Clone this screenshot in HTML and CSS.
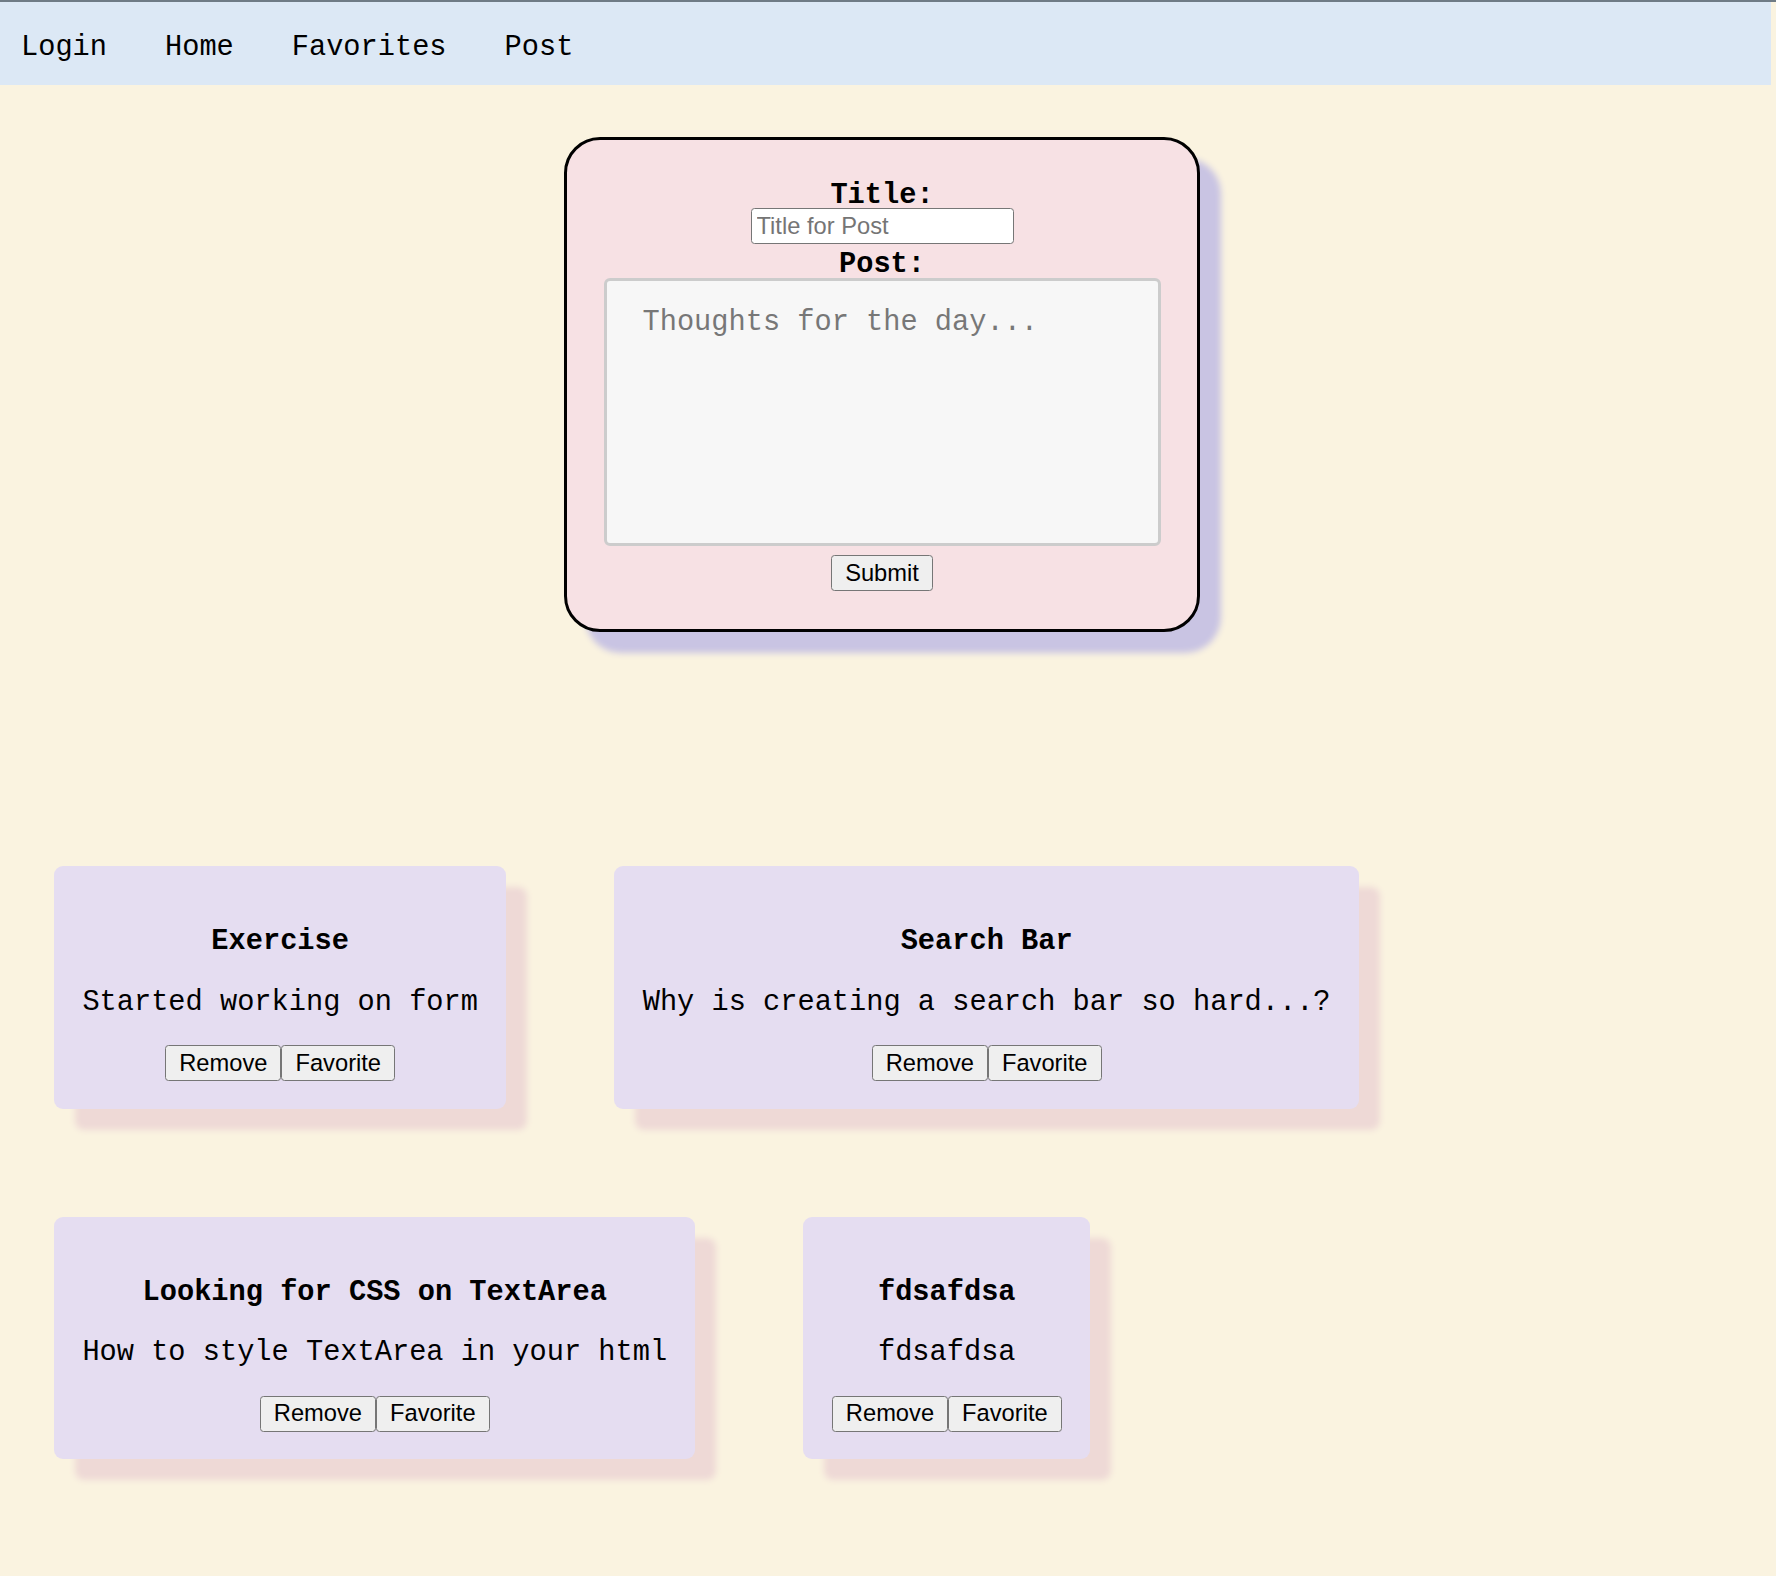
FILE: index.html
```html
<!DOCTYPE html>
<html lang="en">
<head>
<meta charset="utf-8">
<title>Posts</title>
<link rel="stylesheet" href="styles.css">
</head>
<body>
<div class="topline"></div>
<nav class="nav">
  <a class="nav-link" href="#">Login</a>
  <a class="nav-link" href="#">Home</a>
  <a class="nav-link" href="#">Favorites</a>
  <a class="nav-link" href="#">Post</a>
</nav>
<main>
  <section class="composer">
    <form class="post-form">
      <label class="form-label" for="title">Title:</label>
      <input class="title-input" id="title" type="text" placeholder="Title for Post">
      <label class="form-label post-label" for="post">Post:</label>
      <textarea class="post-input" id="post" placeholder="Thoughts for the day..."></textarea>
      <button class="btn submit-btn" type="button">Submit</button>
    </form>
  </section>
  <section class="posts">
    <article class="card">
      <p class="card-title">Exercise</p>
      <p class="card-body">Started working on form</p>
      <div class="card-actions"><button class="btn" type="button">Remove</button><button class="btn" type="button">Favorite</button></div>
    </article>
    <article class="card">
      <p class="card-title">Search Bar</p>
      <p class="card-body">Why is creating a search bar so hard...?</p>
      <div class="card-actions"><button class="btn" type="button">Remove</button><button class="btn" type="button">Favorite</button></div>
    </article>
    <article class="card">
      <p class="card-title">Looking for CSS on TextArea</p>
      <p class="card-body">How to style TextArea in your html</p>
      <div class="card-actions"><button class="btn" type="button">Remove</button><button class="btn" type="button">Favorite</button></div>
    </article>
    <article class="card">
      <p class="card-title">fdsafdsa</p>
      <p class="card-body">fdsafdsa</p>
      <div class="card-actions"><button class="btn" type="button">Remove</button><button class="btn" type="button">Favorite</button></div>
    </article>
  </section>
</main>
</body>
</html>
```
FILE: styles.css
```css
* {
  box-sizing: border-box;
}

html,
body {
  margin: 0;
  padding: 0;
}

body {
  background: #faf3e0;
  font-family: "Liberation Mono", "Courier New", monospace;
  color: #000;
}

.topline {
  height: 2px;
  background: #6f7b85;
}

.nav {
  width: 1771px;
  height: 83px;
  background: #dce8f5;
  display: flex;
  gap: 58px;
  padding: 30px 0 0 21px;
}

.nav-link {
  font-size: 28.67px;
  line-height: 32px;
  color: #000;
  text-decoration: none;
}

.composer {
  display: flex;
  justify-content: center;
  padding-right: 12px;
  margin-top: 52px;
}

.post-form {
  width: 636px;
  height: 495px;
  background: #f7e1e4;
  border: 3px solid #000;
  border-radius: 36px;
  box-shadow: 21px 21px 6px #c9c4e3;
  padding: 40px 36px 38px;
  display: flex;
  flex-direction: column;
  align-items: center;
}

.form-label {
  font-size: 28.67px;
  font-weight: bold;
  line-height: 32px;
}

.title-input {
  width: 263px;
  height: 36px;
  margin-top: -4px;
  padding: 0 5px;
  border: 1.5px solid #767676;
  border-radius: 3.5px;
  background: #fff;
  font-family: "Liberation Sans", Arial, sans-serif;
  font-size: 23.7px;
  color: #000;
}

.title-input::placeholder {
  color: #757575;
}

.post-label {
  margin-top: 5px;
}

.post-input {
  width: 557px;
  height: 268px;
  flex: none;
  margin-top: -3px;
  border: 3.5px solid #ccc;
  border-radius: 6px;
  background: #f7f7f7;
  padding: 25px 36px;
  font-family: "Liberation Mono", "Courier New", monospace;
  font-size: 28.67px;
  resize: none;
  outline: none;
}

.post-input::placeholder {
  color: #777;
}

.submit-btn {
  margin-top: 9px;
}

.btn {
  font-family: "Liberation Sans", Arial, sans-serif;
  font-size: 23.7px;
  line-height: 27px;
  padding: 3.5px 13px;
  border: 1.5px solid #767676;
  border-radius: 3.5px;
  background: #efefef;
  color: #000;
}

.posts {
  display: flex;
  flex-wrap: wrap;
  align-items: flex-start;
  margin-top: 180px;
}

.card {
  margin: 54px;
  padding: 27.6px 28.4px;
  background: #e5ddf1;
  border-radius: 9px;
  box-shadow: 21px 21px 6px #eed9d6;
  text-align: center;
}

.card-title {
  margin: 31.5px 0 27.5px;
  font-size: 28.67px;
  font-weight: bold;
}

.card-body {
  margin: 0 0 26.5px;
  font-size: 28.67px;
  white-space: nowrap;
}

.card-actions {
  display: flex;
  justify-content: center;
}
```
